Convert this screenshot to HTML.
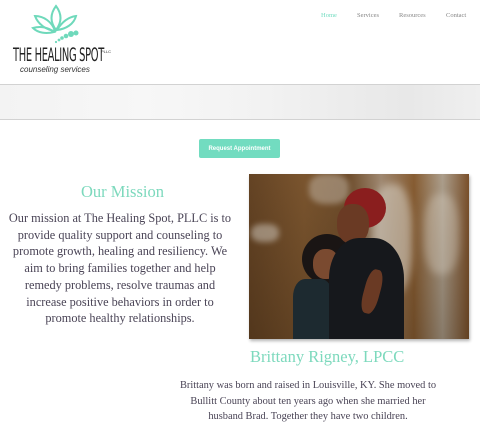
<!DOCTYPE html>
<html><head><meta charset="utf-8"><style>
*{margin:0;padding:0;box-sizing:border-box}
body{width:480px;height:431px;overflow:hidden;background:#fff;position:relative;font-family:"Liberation Serif",serif;color:#4a4456}
.abs{position:absolute}
.nav{top:12px;font-family:"Liberation Serif",serif;font-size:6.5px;color:#888}
.banner{left:0;top:84px;width:480px;height:36px;border-top:1px solid #d2d2d2;border-bottom:1px solid #d2d2d2;
background:linear-gradient(90deg,#f3f3f3 0%,#f7f7f7 30%,#f2f2f2 55%,#ebebeb 75%,#e8e8e8 85%,#efefef 100%)}
.btn{left:199px;top:139px;width:81px;height:19px;background:#72dcc0;border-radius:2px;color:#fff;font-family:"Liberation Sans",sans-serif;font-size:6px;font-weight:bold;display:flex;align-items:center;justify-content:center}
h2{font-weight:normal;color:#7dd9bd;font-size:16.5px;position:absolute;white-space:nowrap}
.p{font-size:12.3px;line-height:16.7px;text-align:center;white-space:nowrap}
</style></head><body>
<svg class="abs" style="left:30px;top:4px" width="52" height="44" viewBox="30 4 52 44">
<g fill="none" stroke="#6fd9bb" stroke-width="2">
<path d="M56 30 C50 22 50 14 56 6 C62 14 62 22 56 30Z"/>
<path d="M55 31 C46 30 38 24 35 16 C44 16 52 22 55 31Z"/>
<path d="M57 30 C62 22 68 17 76 16 C74 24 66 29 57 30Z"/>
<path d="M54 32 C46 34 38 33 33 28 C40 26 48 27 54 32Z"/>
</g>
<g fill="#6fd9bb"><circle cx="71" cy="34" r="3"/><circle cx="66" cy="36" r="2.3"/><circle cx="62" cy="38" r="1.8"/><circle cx="59" cy="40" r="1.4"/><circle cx="56" cy="42" r="1.1"/><circle cx="76" cy="33" r="2.5"/></g>
</svg>
<div class="abs" style="left:13px;top:44px;font-family:'DejaVu Sans','Liberation Sans',sans-serif;font-size:19px;color:#222;letter-spacing:-0.6px;transform:scaleX(0.52);transform-origin:left;white-space:nowrap">THE HEALING SPOT</div>
<div class="abs" style="left:101px;top:49px;font-size:4px;color:#333;font-family:'Liberation Sans',sans-serif">PLLC</div>
<div class="abs" style="left:20px;top:65px;font-family:'Liberation Sans',sans-serif;font-style:italic;font-size:8px;color:#333;white-space:nowrap">counseling services</div>
<div class="abs nav" style="left:321px;color:#72dcc0">Home</div>
<div class="abs nav" style="left:357px">Services</div>
<div class="abs nav" style="left:399px">Resources</div>
<div class="abs nav" style="left:446px">Contact</div>
<div class="abs banner"></div>
<div class="abs btn">Request Appointment</div>
<h2 style="left:81px;top:182px">Our Mission</h2>
<div class="abs p" style="left:0;width:240px;top:210px">Our mission at The Healing Spot, PLLC is to<br>provide quality support and counseling to<br>promote growth, healing and resiliency. We<br>aim to bring families together and help<br>remedy problems, resolve traumas and<br>increase positive behaviors in order to<br>promote healthy relationships.</div>
<div class="abs" style="left:249px;top:174px;width:220px;height:165px;box-shadow:1px 2px 3px rgba(0,0,0,.3);overflow:hidden;background:linear-gradient(90deg,#6e4a28 0%,#8a6035 25%,#7a5530 45%,#b8a088 60%,#9a6a3a 75%,#c8bcaa 88%,#8a5a30 100%)">
<div class="abs" style="left:0;top:0;width:220px;height:165px;background:linear-gradient(180deg,rgba(60,40,20,.2),rgba(40,25,10,.4))"></div>
<div class="abs" style="left:60px;top:0;width:40px;height:30px;background:#d8d2c8;opacity:.4;border-radius:40%;filter:blur(3px)"></div>
<div class="abs" style="left:2px;top:50px;width:28px;height:18px;background:#d5cfc5;opacity:.5;border-radius:40%;filter:blur(3px)"></div>
<div class="abs" style="left:123px;top:10px;width:40px;height:110px;background:#d9d3c7;opacity:.55;border-radius:40%;filter:blur(4px)"></div>
<div class="abs" style="left:175px;top:20px;width:35px;height:80px;background:#d6cdbf;opacity:.4;border-radius:40%;filter:blur(4px)"></div>
<div class="abs" style="left:53px;top:60px;width:50px;height:50px;background:#1a1514;border-radius:50%"></div>
<div class="abs" style="left:64px;top:75px;width:26px;height:30px;background:#7a4a30;border-radius:45%"></div>
<div class="abs" style="left:44px;top:105px;width:40px;height:60px;background:#1d2a30;border-radius:30% 30% 0 0"></div>
<div class="abs" style="left:95px;top:14px;width:42px;height:40px;background:#8a1e1e;border-radius:50%"></div>
<div class="abs" style="left:88px;top:30px;width:32px;height:40px;background:#6a3a24;border-radius:45%"></div>
<div class="abs" style="left:80px;top:64px;width:75px;height:101px;background:#16181c;border-radius:40% 40% 0 0"></div>
<div class="abs" style="left:115px;top:95px;width:16px;height:45px;background:#6a3a24;border-radius:40%;transform:rotate(15deg)"></div>
</div>
<h2 style="left:250px;top:347px">Brittany Rigney, LPCC</h2>
<div class="abs p" style="left:168px;width:280px;top:378px;font-size:10.4px;line-height:15.5px">Brittany was born and raised in Louisville, KY. She moved to<br>Bullitt County about ten years ago when she married her<br>husband Brad. Together they have two children.</div>
</body></html>
